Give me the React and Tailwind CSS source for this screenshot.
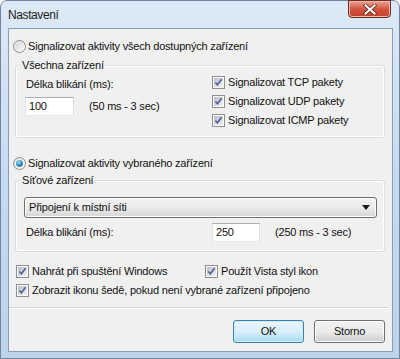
import React from 'react';

const Radio = ({ checked }) => (
  <svg width="13" height="13" viewBox="0 0 13 13" className="shrink-0">
    <defs>
      <linearGradient id="rbg" x1="0" y1="0" x2="1" y2="1">
        <stop offset="0" stopColor="#cfcfcf" />
        <stop offset="1" stopColor="#ffffff" />
      </linearGradient>
      <radialGradient id="rdot" cx="0.4" cy="0.35" r="0.75">
        <stop offset="0" stopColor="#a8e6fb" />
        <stop offset="0.55" stopColor="#2f8fc4" />
        <stop offset="1" stopColor="#174a74" />
      </radialGradient>
    </defs>
    <circle cx="6.5" cy="6.5" r="6" fill="url(#rbg)" stroke="#8c8c8c" />
    <circle cx="6.5" cy="6.5" r="4.6" fill="none" stroke="#f4f4f4" strokeWidth="0.8" />
    {checked && <circle cx="6.5" cy="6.5" r="3.3" fill="url(#rdot)" />}
  </svg>
);

const Check = () => (
  <svg width="13" height="13" viewBox="0 0 13 13" className="shrink-0">
    <defs>
      <linearGradient id="cbg" x1="0" y1="0" x2="1" y2="1">
        <stop offset="0" stopColor="#b9bec4" />
        <stop offset="1" stopColor="#f2f2f2" />
      </linearGradient>
    </defs>
    <rect x="0.5" y="0.5" width="12" height="12" fill="#fbfbfb" stroke="#8e8f8f" />
    <rect x="2" y="2" width="9" height="9" fill="url(#cbg)" />
    <path d="M3.4 6.5 L5.4 8.7 L9.6 3.2" stroke="#4a5f97" strokeWidth="1.6" fill="none" />
  </svg>
);

const GroupBox = ({ label, className, children }) => (
  <div className={`relative border border-[#d5dfe5] rounded-[3px] shadow-[inset_0_0_0_1px_#ffffff] ${className}`}>
    <span className="absolute left-[4px] -top-[8px] px-[2px] bg-[#f0f0f0] leading-[14px]">{label}</span>
    {children}
  </div>
);

const TextBox = ({ value, className }) => (
  <div className={`h-[19px] bg-white border border-[#abadb3] border-l-[#e2e3ea] border-b-[#e3e9ef] border-r-[#dbdfe6] pl-[3px] flex items-center ${className}`}>
    {value}
  </div>
);

const Button = ({ children, primary }) => (
  <button
    className={`w-[71px] h-[23px] rounded-[3px] border flex items-center justify-center ${
      primary
        ? 'border-[#3c7fb1] bg-gradient-to-b from-[#eaf6fd] via-[#d9f0fc] to-[#a7d9f5] shadow-[inset_0_0_0_1px_#cdeeff]'
        : 'border-[#707070] bg-gradient-to-b from-[#f2f2f2] via-[#ebebeb] to-[#cfcfcf] shadow-[inset_0_0_0_1px_#fcfcfc]'
    }`}
  >
    {children}
  </button>
);

export default function App() {
  return (
    <div className="w-[400px] h-[359px] bg-white font-['Liberation_Sans',Arial,sans-serif] text-[11px] tracking-[-0.2px] text-[#111]">
      <div className="h-full rounded-t-[7px] border border-[#71869e] bg-gradient-to-b from-[#dde9f6] via-[#c6daf0] to-[#bcd3eb] flex flex-col pl-[7px] pr-[6px] pb-[6px]">
        {/* titulek */}
        <div className="h-[27px] flex items-start justify-between shrink-0">
          <span className="mt-[7px] text-[12px] leading-[14px] tracking-[-0.4px] text-[#1e1e1e]">Nastavení</span>
          <div className="w-[43px] h-[18px] mr-[2px] -mt-[1px] rounded-b-[4px] border border-[#6e2b24] bg-gradient-to-b from-[#e8a493] via-[#d4533f] to-[#c0402c] shadow-[inset_0_0_0_1px_#f2b9ab] flex items-center justify-center">
            <svg width="14" height="11" viewBox="0 0 14 11">
              <path d="M2.5 1.5 L11.5 9.5 M11.5 1.5 L2.5 9.5" stroke="#5a2a24" strokeWidth="3.6" strokeLinecap="square" />
              <path d="M2.5 1.5 L11.5 9.5 M11.5 1.5 L2.5 9.5" stroke="#ffffff" strokeWidth="2" strokeLinecap="square" />
            </svg>
          </div>
        </div>

        {/* klientská oblast */}
        <div className="flex-1 border border-[#8a9db3] bg-[#f0f0f0] flex flex-col leading-[13px]">
          <div className="mt-[10px] h-[15px] pl-[4px] flex items-center gap-[2px]">
            <Radio />
            <span>Signalizovat aktivity všech dostupných zařízení</span>
          </div>

          <GroupBox label="Všechna zařízení" className="mt-[11px] ml-[6px] mr-[7px] h-[73px] flex">
            <div className="w-[196px] pl-[9px] pt-[12px]">
              <div className="pl-[1px]">Délka blikání (ms):</div>
              <div className="mt-[6px] flex items-center">
                <TextBox value="100" className="w-[49px]" />
                <span className="ml-[15px]">(50 ms - 3 sec)</span>
              </div>
            </div>
            <div className="pt-[7px] flex flex-col">
              {['Signalizovat TCP pakety', 'Signalizovat UDP pakety', 'Signalizovat ICMP pakety'].map((t) => (
                <div key={t} className="h-[19px] flex items-center gap-[3px]">
                  <Check />
                  <span>{t}</span>
                </div>
              ))}
            </div>
          </GroupBox>

          <div className="mt-[18px] h-[15px] pl-[4px] flex items-center gap-[2px]">
            <Radio checked />
            <span>Signalizovat aktivity vybraného zařízení</span>
          </div>

          <GroupBox label="Síťové zařízení" className="mt-[9px] ml-[6px] mr-[7px] h-[72px]">
            <div className="mt-[16px] ml-[8px] mr-[7px] h-[21px] rounded-[3px] border border-[#707070] bg-gradient-to-b from-[#f2f2f2] via-[#ebebeb] to-[#d6d6d6] shadow-[inset_0_0_0_1px_#fcfcfc] flex items-center justify-between pl-[4px] pr-[6px]">
              <span>Připojení k místní síti</span>
              <svg width="8" height="5" viewBox="0 0 8 5">
                <path d="M0 0 H8 L4 5 Z" fill="#1a1a1a" />
              </svg>
            </div>
            <div className="mt-[5px] flex items-center">
              <span className="w-[196px] pl-[10px]">Délka blikání (ms):</span>
              <TextBox value="250" className="w-[48px]" />
              <span className="ml-[15px]">(250 ms - 3 sec)</span>
            </div>
          </GroupBox>

          <div className="mt-[12px] h-[15px] flex items-center">
            <div className="w-[196px] pl-[7px] flex items-center gap-[3px]">
              <Check />
              <span>Nahrát při spuštění Windows</span>
            </div>
            <div className="flex items-center gap-[3px]">
              <Check />
              <span>Použít Vista styl ikon</span>
            </div>
          </div>
          <div className="mt-[4px] h-[15px] pl-[7px] flex items-center gap-[3px]">
            <Check />
            <span>Zobrazit ikonu šedě, pokud není vybrané zařízení připojeno</span>
          </div>

          <div className="mt-[9px] mr-[3px] h-[2px] border-t border-[#d5d5d5] border-b border-b-white" />

          <div className="mt-[11px] mr-[7px] flex justify-end gap-[10px]">
            <Button primary>OK</Button>
            <Button>Storno</Button>
          </div>
        </div>
      </div>
    </div>
  );
}
